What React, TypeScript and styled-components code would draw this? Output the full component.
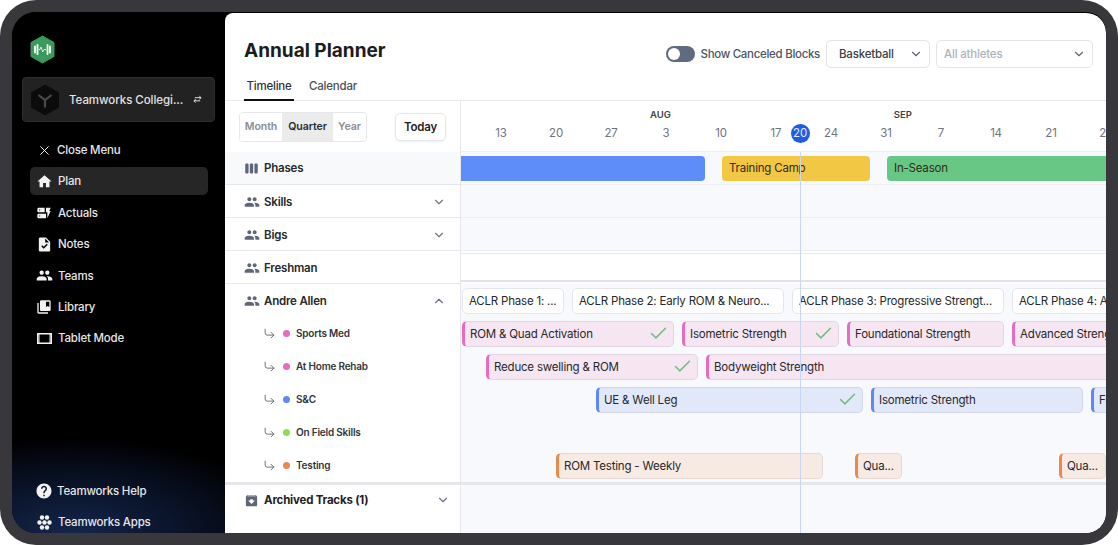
import { FunctionComponent, ReactNode } from "react";
import styled, { createGlobalStyle } from "styled-components";
import { Check, ChevronDown, ChevronUp, CornerDownRight, X } from "lucide-react";
import {
  MdArchive,
  MdCollectionsBookmark,
  MdDynamicForm,
  MdHelp,
  MdHome,
  MdPeople,
  MdTask,
  MdViewWeek,
} from "react-icons/md";

const GlobalStyle = createGlobalStyle`
  html, body {
    margin: 0;
    padding: 0;
    background: #ffffff;
  }
  * {
    box-sizing: border-box;
  }
`;

const Frame = styled.div`
  width: 1118px;
  height: 545px;
  padding: 12px;
  background: #38373c;
  border-radius: 36px;
  overflow: hidden;
  font-family: Inter, "Liberation Sans", sans-serif;
`;
const Screen = styled.div`
  width: 100%;
  height: 100%;
  display: flex;
  border-radius: 24px 20px 20px 24px;
  overflow: hidden;
  background: #000000;
`;

/* sidebar */
const Sidebar = styled.aside`
  width: 213px;
  flex-shrink: 0;
  display: flex;
  flex-direction: column;
  padding: 23px 10px 0 10px;
  background: radial-gradient(ellipse 220px 95px at 28% 100%, #14264d 0%, #060c1a 70%, #000000 100%);
  color: #e8e8e8;
`;
const LogoWrap = styled.div`
  height: 30px;
  padding-left: 8px;
  display: flex;
  margin-bottom: 12px;
`;
const TeamCard = styled.div`
  height: 45px;
  display: flex;
  align-items: center;
  padding: 0 12px 0 8px;
  gap: 10px;
  background: #222222;
  border: 1px solid #2e2e2e;
  border-radius: 4px;
  margin-bottom: 14px;
  width: 193px;
  svg {
    flex-shrink: 0;
  }
`;
const TeamName = styled.span`
  flex: 1;
  font-size: 11.5px;
  font-weight: 500;
  letter-spacing: -0.05px;
  white-space: nowrap;
  color: #e2e2e2;
`;
const NavList = styled.nav`
  display: flex;
  flex-direction: column;
  gap: 3.4px;
  margin-left: 8px;
  width: 178px;
`;
const NavItem = styled.div<{ $active?: boolean; $tight?: boolean }>`
  height: 28px;
  display: flex;
  align-items: center;
  gap: ${(p) => (p.$tight ? "6px" : "5px")};
  padding-left: 6px;
  border-radius: 5px;
  font-size: 11.5px;
  letter-spacing: -0.2px;
  font-weight: 500;
  white-space: nowrap;
  color: #e6e6e6;
  background: ${(p) => (p.$active ? "#262626" : "transparent")};
`;
const NavIcon = styled.span`
  width: 16px;
  height: 16px;
  flex-shrink: 0;
  display: flex;
  align-items: center;
  justify-content: center;
  color: #f2f2f2;
  svg {
    flex-shrink: 0;
  }
`;
const BottomNav = styled(NavList)`
  margin-top: auto;
  margin-bottom: -3px;
`;

/* main */
const Main = styled.main`
  flex: 1;
  min-width: 0;
  margin-top: 1px;
  display: flex;
  flex-direction: column;
  background: #ffffff;
  border-radius: 8px 20px 20px 0;
  overflow: hidden;
`;
const Header = styled.header`
  height: 88px;
  flex-shrink: 0;
  display: flex;
  flex-direction: column;
  border-bottom: 1px solid #e5e7eb;
`;
const HeaderTop = styled.div`
  height: 60px;
  display: flex;
  align-items: flex-end;
  padding: 0 13px 5px 19px;
`;
const Title = styled.h1`
  margin: 0 0 3px 0;
  font-size: 19px;
  line-height: 28px;
  font-weight: 700;
  color: #1c1c1e;
  flex: 1;
`;
const Toggle = styled.span`
  width: 29px;
  height: 16px;
  border-radius: 8px;
  background: #5f6b7e;
  padding: 2px;
  margin-right: 6px;
  margin-bottom: 6px;
  display: flex;
`;
const Knob = styled.span`
  width: 12px;
  height: 12px;
  border-radius: 50%;
  background: #ffffff;
`;
const ToggleLabel = styled.span`
  font-size: 11.5px;
  letter-spacing: -0.3px;
  line-height: 16px;
  font-weight: 500;
  color: #4b5563;
  margin-right: 6px;
  margin-bottom: 6px;
  white-space: nowrap;
`;
const Select = styled.div<{ $width: number; $placeholder?: boolean }>`
  width: ${(p) => p.$width}px;
  height: 28px;
  display: flex;
  align-items: center;
  justify-content: space-between;
  padding: 0 6px 0 ${(p) => (p.$placeholder ? 7 : 12)}px;
  margin-left: ${(p) => (p.$placeholder ? 6 : 0)}px;
  border: 1px solid #e2e4ec;
  border-radius: 5px;
  font-size: 11.5px;
  letter-spacing: -0.2px;
  font-weight: 500;
  color: ${(p) => (p.$placeholder ? "#aeb1b8" : "#3a3d44")};
  background: #ffffff;
`;
const Tabs = styled.div`
  flex: 1;
  display: flex;
  align-items: flex-end;
  padding-left: 19px;
  gap: 12px;
`;
const Tab = styled.div<{ $active?: boolean }>`
  height: 27px;
  width: ${(p) => (p.$active ? 50 : 54)}px;
  text-align: center;
  line-height: 25px;
  font-size: 11.5px;
  letter-spacing: -0.2px;
  font-weight: 500;
  color: ${(p) => (p.$active ? "#2f3136" : "#4b4e55")};
  border-bottom: 2px solid ${(p) => (p.$active ? "#111111" : "transparent")};
  margin-bottom: -1px;
`;
const Body = styled.div`
  flex: 1;
  min-height: 0;
  display: flex;
`;

/* left panel */
const LeftPanel = styled.div`
  width: 236px;
  flex-shrink: 0;
  display: flex;
  flex-direction: column;
  border-right: 1px solid #e5e7eb;
`;
const Toolbar = styled.div`
  height: 51px;
  flex-shrink: 0;
  display: flex;
  align-items: center;
  padding-left: 14px;
`;
const Segments = styled.div`
  display: flex;
  height: 30px;
  border: 1px solid #e5e7eb;
  border-radius: 4px;
  overflow: hidden;
`;
const Segment = styled.div<{ $width: number; $active?: boolean }>`
  width: ${(p) => p.$width}px;
  display: flex;
  align-items: center;
  justify-content: center;
  font-size: 10.6px;
  letter-spacing: -0.1px;
  font-weight: 600;
  color: ${(p) => (p.$active ? "#2b2d31" : "#8a8d94")};
  background: ${(p) => (p.$active ? "#ebebeb" : "#ffffff")};
`;
const TodayButton = styled.div`
  width: 51px;
  height: 28px;
  margin-left: 28px;
  display: flex;
  align-items: center;
  justify-content: center;
  font-size: 11.5px;
  letter-spacing: -0.2px;
  font-weight: 600;
  color: #1f2125;
  border: 1px solid #e4e6ee;
  border-radius: 5px;
  box-shadow: 0 1px 2px rgba(30, 40, 70, 0.08);
`;
const TrackRow = styled.div<{ $shaded?: boolean; $ruled?: boolean }>`
  height: 33px;
  flex-shrink: 0;
  display: flex;
  align-items: center;
  padding: ${(p) => (p.$shaded ? 0 : 2)}px 14px 0 19px;
  background: ${(p) => (p.$shaded ? "#f8f9fb" : "#ffffff")};
  border-bottom: 1px solid ${(p) => (p.$ruled ? "#e5e7eb" : "transparent")};
  font-size: 11.5px;
  letter-spacing: -0.2px;
  font-weight: 600;
  color: #26282c;
`;
const TrackIcon = styled.span`
  width: 15px;
  margin-right: 5px;
  display: flex;
  color: #5f6678;
  svg {
    flex-shrink: 0;
  }
`;
const TrackLabel = styled.span`
  flex: 1;
`;
const Chevron = styled.span`
  display: flex;
  color: #6f7586;
`;
const SubRow = styled.div`
  height: 33px;
  flex-shrink: 0;
  display: flex;
  align-items: center;
  padding: 0 0 1px 38px;
  font-size: 10px;
  letter-spacing: -0.2px;
  font-weight: 600;
  color: #33353a;
`;
const SubArrow = styled.span`
  display: flex;
  color: #5f6678;
  margin-right: 7px;
`;
const Dot = styled.span<{ $color: string }>`
  width: 7px;
  height: 7px;
  border-radius: 50%;
  background: ${(p) => p.$color};
  margin-right: 6px;
`;
const ThickRule = styled.div`
  height: 3px;
  flex-shrink: 0;
  background: #e6e6ea;
`;
const ArchivedRow = styled.div`
  flex: 1;
  display: flex;
  align-items: flex-start;
  padding: 8px 10px 0 19px;
  font-size: 11.5px;
  letter-spacing: -0.2px;
  font-weight: 700;
  color: #1e2024;
`;

/* timeline */
const Timeline = styled.div`
  position: relative;
  flex: 1;
  min-width: 0;
  display: flex;
  flex-direction: column;
  overflow: hidden;
`;
const TimeHead = styled.div`
  height: 51px;
  flex-shrink: 0;
  border-bottom: 1px solid #eceef2;
  display: flex;
  flex-direction: column;
`;
const Months = styled.div`
  height: 21px;
  display: flex;
  align-items: flex-end;
  padding-bottom: 2px;
  font-size: 9.5px;
  font-weight: 600;
  color: #3f4248;
`;
const Month = styled.span<{ $offset: number }>`
  margin-left: ${(p) => p.$offset}px;
`;
const Dates = styled.div`
  display: flex;
  padding-left: 12.5px;
  margin-top: 1px;
`;
const DateCell = styled.span`
  width: 55px;
  flex-shrink: 0;
  text-align: center;
  font-size: 11.5px;
  letter-spacing: -0.2px;
  line-height: 20px;
  color: #6f7480;
`;
const TodayBadge = styled.span`
  position: absolute;
  left: 329.5px;
  top: 23px;
  width: 19px;
  height: 19px;
  border-radius: 50%;
  background: #1f5be8;
  color: #e6ecff;
  font-size: 11.5px;
  letter-spacing: -0.2px;
  line-height: 19px;
  text-align: center;
`;
const TodayLine = styled.span`
  position: absolute;
  left: 339px;
  top: 51px;
  bottom: 0;
  width: 1px;
  background: #c9d6f8;
  pointer-events: none;
`;
const Lane = styled.div<{ $ruled?: boolean }>`
  height: 33px;
  flex-shrink: 0;
  display: flex;
  align-items: flex-start;
  padding-top: 3.5px;
  background: #f8f9fc;
  border-bottom: ${(p) => (p.$ruled ? "1px solid #eceef2" : "none")};
  overflow: hidden;
`;
const OpenLane = styled.div`
  height: 33px;
  flex-shrink: 0;
  padding: 2px 0;
  background: #fdfdfe;
`;
const OpenLaneBand = styled.div`
  height: 100%;
  background: #ffffff;
  border-top: 1px solid #e6e8ec;
  border-bottom: 2px solid #e2e3e6;
`;
const LaneFill = styled.div`
  flex: 1;
  background: #f8f9fc;
`;
const PhaseBlock = styled.div<{ $left: number; $width: number; $color: string; $flatLeft?: boolean }>`
  width: ${(p) => p.$width}px;
  margin-left: ${(p) => p.$left}px;
  margin-top: 0.5px;
  flex-shrink: 0;
  height: 25px;
  padding: 0 0 1px 7px;
  display: flex;
  align-items: center;
  font-size: 11.5px;
  letter-spacing: -0.2px;
  font-weight: 400;
  color: #2f2a16;
  white-space: nowrap;
  background: ${(p) => p.$color};
  border-radius: ${(p) => (p.$flatLeft ? "0 4px 4px 0" : "4px")};
`;
const PlanCard = styled.div<{ $left: number; $width: number }>`
  width: ${(p) => p.$width}px;
  margin-left: ${(p) => p.$left}px;
  flex-shrink: 0;
  height: 26px;
  padding-left: 6px;
  display: flex;
  align-items: center;
  font-size: 11.5px;
  letter-spacing: -0.2px;
  color: #26282c;
  white-space: nowrap;
  overflow: hidden;
  background: #ffffff;
  border: 1px solid #e4e6ee;
  border-radius: 5px;
`;
const Block = styled.div<{ $left: number; $width: number; $bg: string; $edge: string }>`
  width: ${(p) => p.$width}px;
  margin-left: ${(p) => p.$left}px;
  flex-shrink: 0;
  height: 26px;
  padding: 0 4.5px 0 5px;
  display: flex;
  align-items: center;
  justify-content: space-between;
  font-size: 11.5px;
  letter-spacing: -0.2px;
  color: #26282c;
  white-space: nowrap;
  overflow: hidden;
  background: ${(p) => p.$bg};
  border: 1px solid rgba(60, 60, 80, 0.1);
  border-left: 3px solid ${(p) => p.$edge};
  border-radius: 5px;
`;
const DoneMark = styled.span`
  display: flex;
  color: #6cc07f;
`;

type BlockDef = { left: number; width: number; text: string; done?: boolean };

const pink = { bg: "#f6e6f2", edge: "#e56cc0" };
const blue = { bg: "#e1e8f9", edge: "#5b8af5" };
const orange = { bg: "#f6eae3", edge: "#e8894e" };

const planCards: BlockDef[] = [
  { left: 1, width: 102, text: "ACLR Phase 1: ..." },
  { left: 8, width: 212, text: "ACLR Phase 2: Early ROM & Neuro..." },
  { left: 8, width: 212, text: "ACLR Phase 3: Progressive Strengt..." },
  { left: 8, width: 212, text: "ACLR Phase 4: Advanced" },
];
const sportsMed: BlockDef[] = [
  { left: 1, width: 212, text: "ROM & Quad Activation", done: true },
  { left: 8, width: 157, text: "Isometric Strength", done: true },
  { left: 8, width: 157, text: "Foundational Strength" },
  { left: 8, width: 212, text: "Advanced Strength" },
];
const homeRehab: BlockDef[] = [
  { left: 25, width: 212, text: "Reduce swelling & ROM", done: true },
  { left: 8, width: 500, text: "Bodyweight Strength" },
];
const strength: BlockDef[] = [
  { left: 135, width: 267, text: "UE & Well Leg", done: true },
  { left: 8, width: 212, text: "Isometric Strength" },
  { left: 8, width: 100, text: "Functional" },
];
const testing: BlockDef[] = [
  { left: 95, width: 267, text: "ROM Testing - Weekly" },
  { left: 32, width: 47, text: "Qua..." },
  { left: 157, width: 47, text: "Qua..." },
];

const BlockLane: FunctionComponent<{ items: BlockDef[]; tone: { bg: string; edge: string } }> = ({ items, tone }) => (
  <Lane>
    {items.map((b) => (
      <Block key={b.text + b.left} $left={b.left} $width={b.width} $bg={tone.bg} $edge={tone.edge}>
        {b.text}
        {b.done && (
          <DoneMark>
            <Check size={21} strokeWidth={1.7} />
          </DoneMark>
        )}
      </Block>
    ))}
  </Lane>
);

const LogoHex = () => (
  <svg width="25" height="29" viewBox="0 0 25 29">
    <path d="M12.5 1 L24 7.500 V21.500 L12.500 28 L1 21.500 V7.500 Z" fill="#3a9a5c" stroke="#3a9a5c" strokeWidth="1" strokeLinejoin="round" />
    <path d="M5 11.500v6M7.500 10v9M17.500 10v9M20 11.500v6" stroke="#ffffff" strokeWidth="1.800" strokeLinecap="round" />
    <path d="M9 14.500h1l1-2.500 1.700 5 1.300-2.500h2" stroke="#ffffff" strokeWidth="0.800" fill="none" />
  </svg>
);

const TeamHex = () => (
  <svg width="28" height="32" viewBox="0 0 28 32">
    <path d="M14 0.500 L28 8.500 V23.500 L14 31.500 L0 23.500 V8.500 Z" fill="#0b0b0b" />
    <path d="M7.500 11 L14 16 L20.500 11 M14 16 V23.500" stroke="#4a4a4a" strokeWidth="2.200" fill="none" />
  </svg>
);

const SwapIcon = () => (
  <svg width="9" height="9" viewBox="0 0 10 10" fill="none" stroke="#e0e0e0" strokeWidth="1.100">
    <path d="M1 6.500h7M3 4.800 L1 6.500 L3 8.200" />
    <path d="M9 3H2M7 1.300 L9 3 L7 4.700" />
  </svg>
);

const TabletIcon = () => (
  <svg width="15" height="11" viewBox="0 0 15 11" fill="none" stroke="#f2f2f2">
    <rect x="0.750" y="0.750" width="13.500" height="9.500" strokeWidth="1.500" />
    <path d="M2 1v9M13 1v9" strokeWidth="1" />
  </svg>
);

const AppsIcon = () => (
  <svg width="15" height="15" viewBox="0 0 15 15" fill="#f2f2f2">
    <circle cx="5" cy="2.500" r="2.200" />
    <circle cx="10" cy="2.500" r="2.200" />
    <circle cx="2.500" cy="7.500" r="2.200" />
    <circle cx="7.500" cy="7.500" r="2.200" />
    <circle cx="12.500" cy="7.500" r="2.200" />
    <circle cx="5" cy="12.500" r="2.200" />
    <circle cx="10" cy="12.500" r="2.200" />
  </svg>
);

const navItems: { label: string; icon: ReactNode; active?: boolean }[] = [
  { label: "Plan", icon: <MdHome size={17} />, active: true },
  { label: "Actuals", icon: <MdDynamicForm size={16} /> },
  { label: "Notes", icon: <MdTask size={17} /> },
  { label: "Teams", icon: <MdPeople size={17} /> },
  { label: "Library", icon: <MdCollectionsBookmark size={16} /> },
  { label: "Tablet Mode", icon: <TabletIcon /> },
];

const groupRows = [
  { label: "Skills", open: false },
  { label: "Bigs", open: false },
  { label: "Freshman", none: true },
];

const subRows = [
  { label: "Sports Med", color: "#e56cc0" },
  { label: "At Home Rehab", color: "#e56cc0" },
  { label: "S&C", color: "#5b8af5" },
  { label: "On Field Skills", color: "#8fdc55" },
  { label: "Testing", color: "#e8894e" },
];

const dates = ["13", "20", "27", "3", "10", "17", "24", "31", "7", "14", "21", "28"];

export default function App() {
  return (
    <>
      <GlobalStyle />
      <Frame>
        <Screen>
          <Sidebar>
            <LogoWrap>
              <LogoHex />
            </LogoWrap>
            <TeamCard>
              <TeamHex />
              <TeamName>Teamworks Collegi...</TeamName>
              <SwapIcon />
            </TeamCard>
            <NavList>
              <NavItem>
                <NavIcon>
                  <X size={15} strokeWidth={1.6} />
                </NavIcon>
                Close Menu
              </NavItem>
              {navItems.map((n) => (
                <NavItem key={n.label} $active={n.active} $tight>
                  <NavIcon>{n.icon}</NavIcon>
                  {n.label}
                </NavItem>
              ))}
            </NavList>
            <BottomNav>
              <NavItem>
                <NavIcon>
                  <MdHelp size={18} />
                </NavIcon>
                Teamworks Help
              </NavItem>
              <NavItem $tight>
                <NavIcon>
                  <AppsIcon />
                </NavIcon>
                Teamworks Apps
              </NavItem>
            </BottomNav>
          </Sidebar>
          <Main>
            <Header>
              <HeaderTop>
                <Title>Annual Planner</Title>
                <Toggle>
                  <Knob />
                </Toggle>
                <ToggleLabel>Show Canceled Blocks</ToggleLabel>
                <Select $width={104}>
                  Basketball
                  <ChevronDown size={14} color="#5f6678" />
                </Select>
                <Select $width={157} $placeholder>
                  All athletes
                  <ChevronDown size={14} color="#5f6678" />
                </Select>
              </HeaderTop>
              <Tabs>
                <Tab $active>Timeline</Tab>
                <Tab>Calendar</Tab>
              </Tabs>
            </Header>
            <Body>
              <LeftPanel>
                <Toolbar>
                  <Segments>
                    <Segment $width={42}>Month</Segment>
                    <Segment $width={51} $active>
                      Quarter
                    </Segment>
                    <Segment $width={33}>Year</Segment>
                  </Segments>
                  <TodayButton>Today</TodayButton>
                </Toolbar>
                <TrackRow $shaded $ruled>
                  <TrackIcon>
                    <MdViewWeek size={15} />
                  </TrackIcon>
                  <TrackLabel>Phases</TrackLabel>
                </TrackRow>
                {groupRows.map((g) => (
                  <TrackRow key={g.label} $ruled>
                    <TrackIcon>
                      <MdPeople size={16} />
                    </TrackIcon>
                    <TrackLabel>{g.label}</TrackLabel>
                    {!g.none && (
                      <Chevron>
                        <ChevronDown size={14} />
                      </Chevron>
                    )}
                  </TrackRow>
                ))}
                <TrackRow>
                  <TrackIcon>
                    <MdPeople size={16} />
                  </TrackIcon>
                  <TrackLabel>Andre Allen</TrackLabel>
                  <Chevron>
                    <ChevronUp size={14} />
                  </Chevron>
                </TrackRow>
                {subRows.map((s) => (
                  <SubRow key={s.label}>
                    <SubArrow>
                      <CornerDownRight size={13} strokeWidth={1.7} />
                    </SubArrow>
                    <Dot $color={s.color} />
                    {s.label}
                  </SubRow>
                ))}
                <ThickRule />
                <ArchivedRow>
                  <TrackIcon>
                    <MdArchive size={15} />
                  </TrackIcon>
                  <TrackLabel>Archived Tracks (1)</TrackLabel>
                  <Chevron>
                    <ChevronDown size={14} />
                  </Chevron>
                </ArchivedRow>
              </LeftPanel>
              <Timeline>
                <TimeHead>
                  <Months>
                    <Month $offset={189}>AUG</Month>
                    <Month $offset={223}>SEP</Month>
                  </Months>
                  <Dates>
                    {dates.map((d) => (
                      <DateCell key={d}>{d}</DateCell>
                    ))}
                  </Dates>
                </TimeHead>
                <TodayBadge>20</TodayBadge>
                <Lane $ruled>
                  <PhaseBlock $left={-40} $width={284} $color="#5e8cf8" $flatLeft />
                  <PhaseBlock $left={17} $width={148} $color="#f2c744">
                    Training Camp
                  </PhaseBlock>
                  <PhaseBlock $left={17} $width={300} $color="#69c785">
                    In-Season
                  </PhaseBlock>
                </Lane>
                <Lane $ruled />
                <Lane $ruled />
                <OpenLane>
                  <OpenLaneBand />
                </OpenLane>
                <Lane>
                  {planCards.map((c) => (
                    <PlanCard key={c.text} $left={c.left} $width={c.width}>
                      {c.text}
                    </PlanCard>
                  ))}
                </Lane>
                <BlockLane items={sportsMed} tone={pink} />
                <BlockLane items={homeRehab} tone={pink} />
                <BlockLane items={strength} tone={blue} />
                <Lane />
                <BlockLane items={testing} tone={orange} />
                <ThickRule />
                <LaneFill />
                <TodayLine />
              </Timeline>
            </Body>
          </Main>
        </Screen>
      </Frame>
    </>
  );
}
